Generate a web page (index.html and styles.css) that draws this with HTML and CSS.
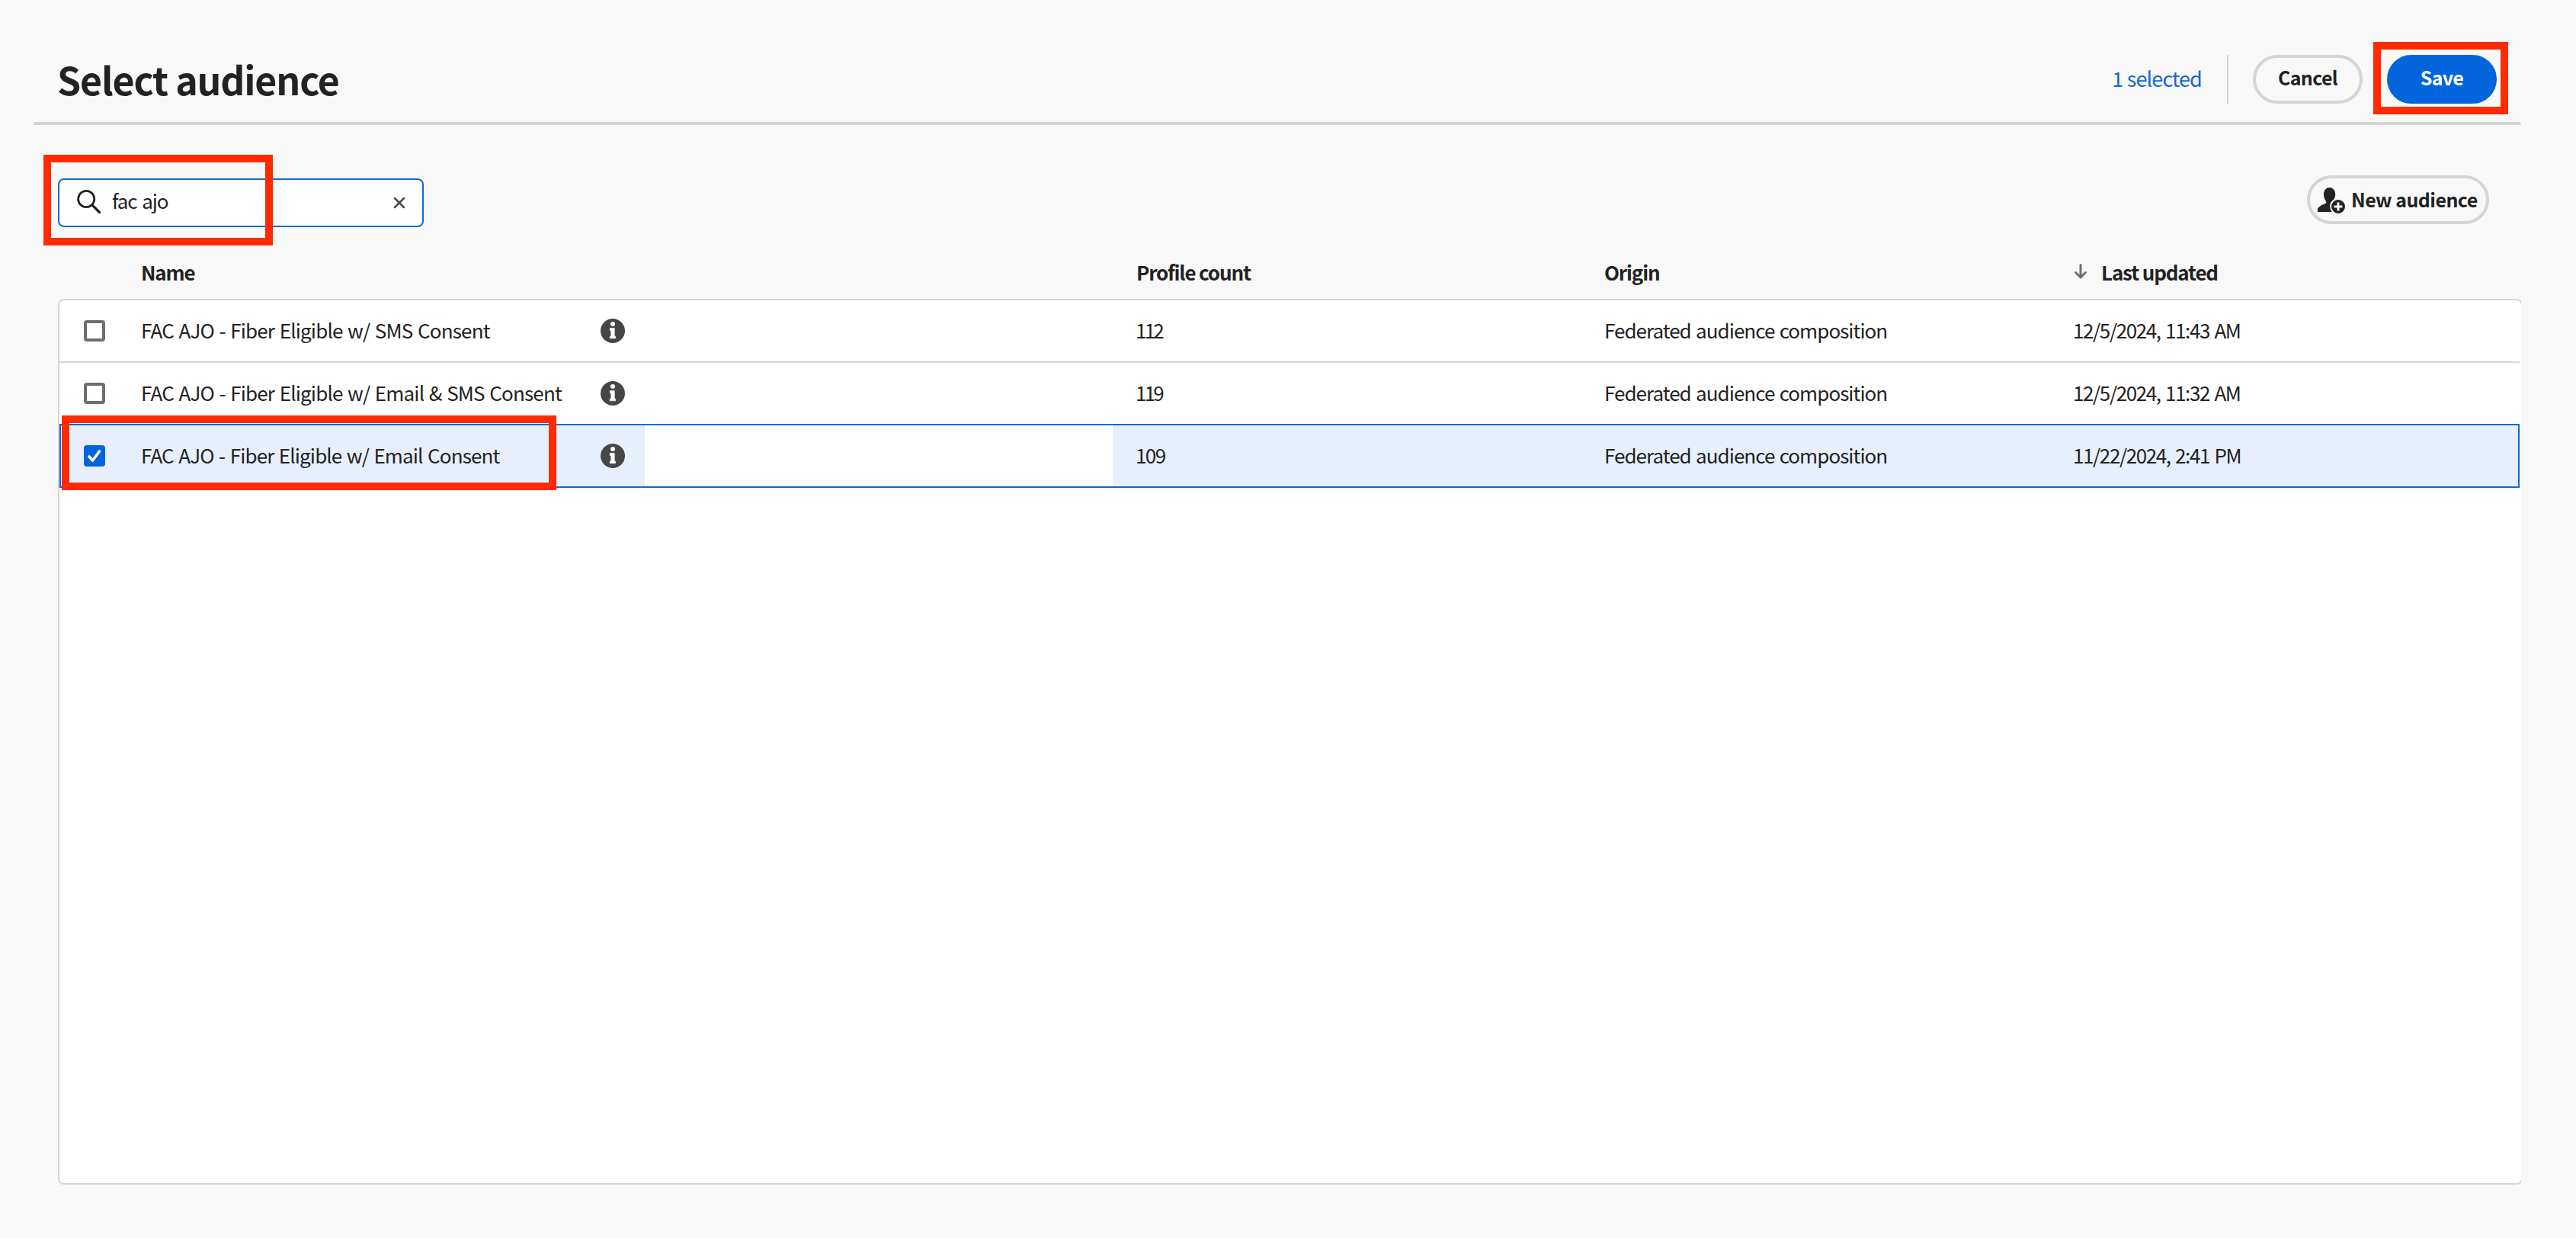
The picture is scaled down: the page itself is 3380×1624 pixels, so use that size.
FILE: index.html
```html
<!DOCTYPE html>
<html lang="en">
<head>
<meta charset="utf-8">
<title>Select audience</title>
<link rel="stylesheet" href="styles.css">
</head>
<body>
<svg class="defs" width="0" height="0" aria-hidden="true">
  <symbol id="info" viewBox="0 0 32 32">
    <circle cx="16" cy="16" r="16" fill="#464646"/>
    <circle cx="16" cy="7" r="3" fill="#fff"/>
    <path d="M12.300 12.500h6v10.700h1.300v2.600h-7.400v-2.600h1.500v-7.700h-1.400z" fill="#fff" stroke="#fff" stroke-width=".6" stroke-linejoin="round"/>
  </symbol>
</svg>
<header class="header">
  <h1 class="title">Select audience</h1>
  <div class="actions">
    <span class="selected-count">1 selected</span>
    <span class="separator"></span>
    <button class="btn">Cancel</button>
    <button class="btn btn-primary">Save</button>
  </div>
</header>
<div class="divider"></div>
<div class="toolbar">
  <div class="search">
    <svg width="32" height="32" viewBox="0 0 32 32" fill="none" stroke="#222" stroke-linecap="round"><circle cx="12.200" cy="12" r="10.600" stroke-width="2.800"/><path stroke-width="3.200" d="M20.200 20.200l9.400 9.300"/></svg>
    <span class="query">fac ajo</span>
    <svg class="clear" width="16" height="16" viewBox="0 0 16 16" fill="none" stroke="#4b4b4b" stroke-width="2.500" stroke-linecap="round"><path d="M2 2l12 12M14 2L2 14"/></svg>
  </div>
  <button class="btn btn-new">
    <svg width="36" height="34" viewBox="0 0 36 34" fill="#222"><path d="M15.600 0C20 0 23.200 3.600 23.200 9c0 2.800-.9 5-2.100 6.700A10.700 10.700 0 0 0 16.200 25a11 11 0 0 0 2.600 7H0v-2.600c0-3.900 4.800-6.600 9.600-8.100 1.900-.6 2-2.600 1-3.900C9 15.400 8 12.600 8 9c0-5.400 3.200-9 7.600-9z"/><path fill-rule="evenodd" d="M27 16a9 9 0 1 0 0 18a9 9 0 1 0 0-18zM25.500 19.600h3v3.900h3.900v3h-3.900v3.900h-3v-3.900h-3.900v-3h3.900z"/></svg>
    <span>New audience</span>
  </button>
</div>
<main class="listing">
  <div class="row head">
    <div></div><div class="cell">Name</div><div></div>
    <div class="cell profile">Profile count</div><div class="cell">Origin</div>
    <div class="cell"><svg class="sort" width="16" height="20" viewBox="0 0 16 20" fill="none" stroke="#6e6e6e" stroke-width="3" stroke-linecap="round" stroke-linejoin="round"><path d="M8 1.500V16M1.600 11.500L8 18l6.400-6.500"/></svg>Last updated</div>
  </div>
  <div class="clip"><div class="table">
    <div class="row">
      <div class="check"><span class="box"></span></div>
      <div class="cell name"><span>FAC AJO - Fiber Eligible w/ SMS Consent</span><svg class="info" width="32" height="32"><use href="#info"/></svg></div>
      <div></div><div class="cell count">112</div><div class="cell origin">Federated audience composition</div><div class="cell date">12/5/2024, 11:43 AM</div>
    </div>
    <div class="row">
      <div class="check"><span class="box"></span></div>
      <div class="cell name"><span>FAC AJO - Fiber Eligible w/ Email &amp; SMS Consent</span><svg class="info" width="32" height="32"><use href="#info"/></svg></div>
      <div></div><div class="cell count">119</div><div class="cell origin">Federated audience composition</div><div class="cell date">12/5/2024, 11:32 AM</div>
    </div>
    <div class="row active">
      <div class="check"><span class="box checked"><svg width="20" height="20" viewBox="0 0 20 20" fill="none" stroke="#fff" stroke-width="3.600" stroke-linecap="round" stroke-linejoin="round"><path d="M3 11l4.500 5L16.500 4"/></svg></span></div>
      <div class="cell name"><span>FAC AJO - Fiber Eligible w/ Email Consent</span><svg class="info" width="32" height="32"><use href="#info"/></svg></div>
      <div class="blank"></div><div class="cell count">109</div><div class="cell origin">Federated audience composition</div><div class="cell date">11/22/2024, 2:41 PM</div>
    </div>
  </div></div>
</main>
<div class="callout callout-save"></div>
<div class="callout callout-search"></div>
<div class="callout callout-row"></div>
</body>
</html>
```
FILE: styles.css
```css
* { box-sizing: border-box; }
body {
  margin: 0;
  position: relative;
  height: 1624px;
  overflow: hidden;
  background: #f8f8f8;
  color: #222;
  font: 26px/36px "Noto Sans CJK SC", "Noto Sans", sans-serif;
}
.defs { display: block; position: absolute; }
.header {
  height: 160px;
  padding: 72px 104px 24px 75px;
  display: flex;
  align-items: center;
  justify-content: space-between;
}
.title {
  margin: 0;
  padding-bottom: 3px;
  font-size: 50px;
  line-height: 62px;
  font-weight: 700;
  letter-spacing: -1.15px;
}
.actions { display: flex; align-items: center; }
.selected-count {
  color: #1268cc;
  font-size: 27px;
  letter-spacing: -0.85px;
  padding-bottom: 2px;
  margin-right: 33px;
}
.separator { width: 2px; height: 64px; background: #d3d3d3; margin-right: 32px; }
.btn {
  height: 64px;
  width: 144px;
  padding: 0 0 7px;
  border: 4px solid #d5d5d5;
  border-radius: 32px;
  background: transparent;
  color: #222;
  font: 700 25px/36px "Noto Sans CJK SC", "Noto Sans", sans-serif;
  letter-spacing: -0.7px;
}
.btn-primary { margin-left: 32px; background: #0265dc; border-color: #0265dc; color: #fff; }
.divider { height: 4px; margin: 0 72px 0 44px; border-radius: 2px; background: #d5d5d5; }
.toolbar {
  height: 158px;
  padding: 66px 114px 0 76px;
  display: flex;
  justify-content: space-between;
}
.search {
  width: 480px;
  height: 64px;
  margin-top: 4px;
  padding: 0 22px 0 23px;
  border: 2px solid #1268cc;
  border-radius: 8px;
  background: #fff;
  display: flex;
  align-items: center;
}
.search svg:first-child { margin-top: -3px; }
.query { flex: 1; margin-left: 14px; padding-bottom: 6px; letter-spacing: -1.1px; word-spacing: 2px; }
.btn-new {
  width: 239px;
  padding: 0 0 2px 10px;
  display: flex;
  align-items: center;
  gap: 8px;
  letter-spacing: -0.55px;
}
.btn-new svg { margin-top: 4px; flex: none; }
.btn-new span { white-space: nowrap; }
.listing { padding: 0 72px 0 76px; }
.row {
  display: grid;
  grid-template-columns: 77px 691px 614px 615px 615px 616px;
  width: 3228px;
  height: 82px;
  border-bottom: 2px solid #d5d5d5;
}
.head { height: 70px; margin-left: 2px; border: 0; font-weight: 700; letter-spacing: -1.15px; }
.cell { display: flex; align-items: center; padding: 0 32px 3px 30px; white-space: nowrap; }
.head .cell { padding-bottom: 0; }
.head .cell:last-child { padding-left: 32px; }
.head .profile { padding-left: 31px; }
.sort { margin-right: 19px; margin-top: -2px; }
.clip { overflow: hidden; }
.table {
  width: 3234px;
  height: 1162px;
  border: 2px solid #d5d5d5;
  border-radius: 8px;
  background: #fff;
}
.check { padding: 26px 0 0 32px; }
.box {
  display: flex;
  align-items: center;
  justify-content: center;
  width: 28px;
  height: 28px;
  border: 4px solid #6e6e6e;
  border-radius: 4px;
  background: #fff;
}
.checked { border-color: #0265dc; background: #0265dc; }
.name { justify-content: space-between; padding-right: 26px; letter-spacing: -0.82px; word-spacing: 1.5px; }
.info { position: relative; top: 1px; }
.count { letter-spacing: -2.8px; }
.active .count { letter-spacing: -1.6px; }
.origin { letter-spacing: -0.97px; word-spacing: 1.5px; }
.date { letter-spacing: -1.4px; word-spacing: 2px; }
.active {
  height: 84px;
  margin-top: -2px;
  border: 2px solid #1268cc;
  background: #e8effc;
  grid-template-columns: 75px 691px 614px 615px 615px 614px;
}
.active .check { padding-left: 30px; }
.active .name { letter-spacing: -0.87px; }
.blank { background: #fff; }
.callout { position: absolute; border: 10px solid #ff2a00; }
.callout-save { left: 3114px; top: 55px; width: 177px; height: 95px; }
.callout-search { left: 57px; top: 203px; width: 301px; height: 119px; }
.callout-row { left: 81px; top: 545px; width: 649px; height: 98px; }
```
